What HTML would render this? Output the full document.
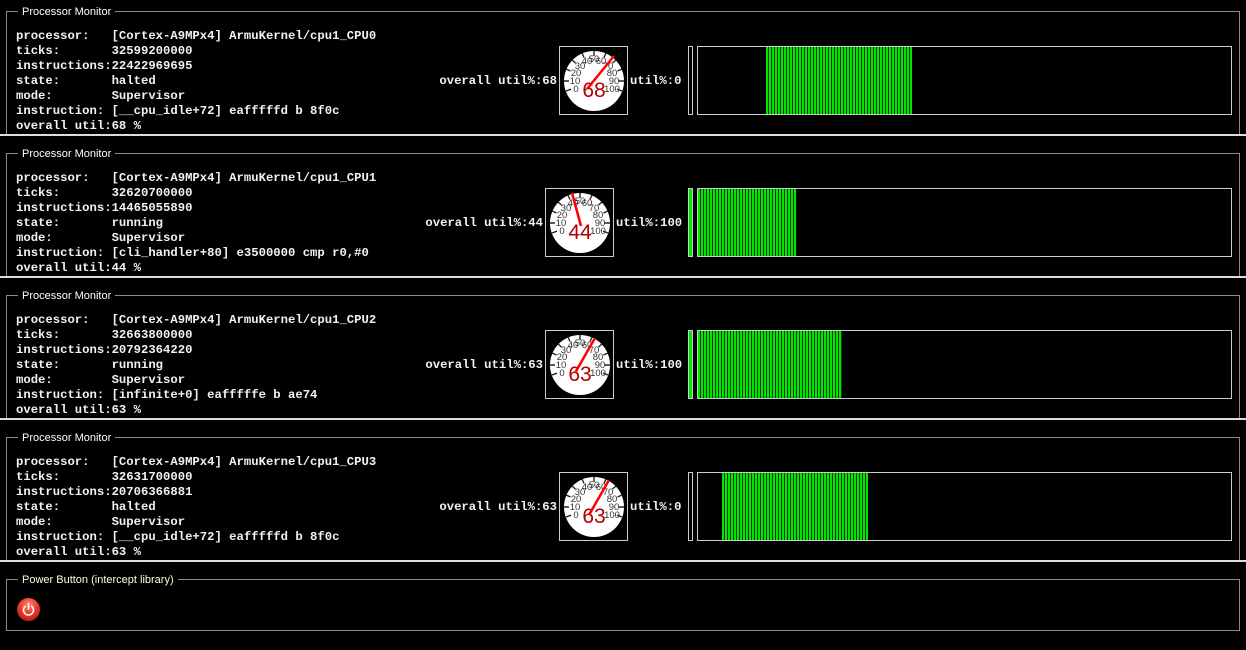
<!DOCTYPE html>
<html><head><meta charset="utf-8"><style>
*{margin:0;padding:0;box-sizing:border-box}
html,body{width:1246px;height:650px;background:#000;overflow:hidden;position:relative;color:#fff}
.fs{position:absolute;left:6px;width:1234px;border:1px solid #8a8a8a;border-bottom:none;height:123px}
.lg{position:absolute;left:11px;top:-6px;background:#000;padding:0 4px;font:11px "Liberation Sans",Arial,sans-serif;color:#fff;line-height:13px}
.sep{position:absolute;left:0;width:1246px;height:2px;background:#ddd}
.txt{position:absolute;left:16px;font:bold 12.25px/15px "Liberation Mono","DejaVu Sans Mono",monospace;white-space:pre;color:#f2f2f2}
.lab{position:absolute;font:bold 12.25px/15px "Liberation Mono","DejaVu Sans Mono",monospace;white-space:pre;color:#f2f2f2}
.gauge{position:absolute;width:69px;height:69px;border:1px solid #ccc}
.thin{position:absolute;left:688px;width:5px;height:69px;border:1px solid #ccc}
.graph{position:absolute;left:697px;width:535px;height:69px;border:1px solid #ccc}
.bars{position:absolute;top:0;bottom:0;background:repeating-linear-gradient(90deg,#00e600 0,#00e600 2px,#003800 2px,#003800 3px)}
svg text{font-family:"Liberation Sans",sans-serif}
</style></head><body>

<!-- Panel 1 -->
<div class="fs" style="top:11px"><div class="lg">Processor Monitor</div></div>
<div class="txt" style="top:29px">processor:   [Cortex-A9MPx4] ArmuKernel/cpu1_CPU0
ticks:       32599200000
instructions:22422969695
state:       halted
mode:        Supervisor
instruction: [__cpu_idle+72] eafffffd b 8f0c
overall util:68 %</div>
<div class="lab" style="top:74px;right:689px">overall util%:68</div>
<div class="gauge" style="left:559px;top:46px"><svg width="67" height="67" viewBox="0 0 67 67">
<circle cx="34" cy="34" r="30" fill="#fff"/>
<g stroke="#222" stroke-width="1.4"><path d="M6 44l5-1.8M4 34h5M6 22l4.5 2M12 13l3.5 3M22 6l2 4.5M34 4v5M46 6l-2 4.5M56 13l-3.5 3M62 22l-4.5 2M64 34h-5M62 44l-5-1.8"/></g>
<g font-size="9.5" fill="#333" text-anchor="middle"><text x="16" y="45">0</text><text x="15" y="37">10</text><text x="16" y="29">20</text><text x="20" y="22">30</text><text x="27" y="17">40</text><text x="34" y="15">50</text><text x="41" y="17">60</text><text x="48" y="22">70</text><text x="52" y="29">80</text><text x="54" y="37">90</text><text x="52" y="45">100</text></g>
<text x="34" y="50" font-size="21" fill="#b00000" text-anchor="middle">68</text>
<path d="M27 42L54 9" stroke="#f00" stroke-width="2.5"/></svg></div>
<div class="lab" style="top:74px;left:630px">util%:0</div>
<div class="thin" style="top:46px"></div>
<div class="graph" style="top:46px"><div class="bars" style="left:68px;width:146px;top:0"></div></div>

<div class="sep" style="top:134px"></div>

<!-- Panel 2 -->
<div class="fs" style="top:153px"><div class="lg">Processor Monitor</div></div>
<div class="txt" style="top:171px">processor:   [Cortex-A9MPx4] ArmuKernel/cpu1_CPU1
ticks:       32620700000
instructions:14465055890
state:       running
mode:        Supervisor
instruction: [cli_handler+80] e3500000 cmp r0,#0
overall util:44 %</div>
<div class="lab" style="top:216px;right:703px">overall util%:44</div>
<div class="gauge" style="left:545px;top:188px"><svg width="67" height="67" viewBox="0 0 67 67">
<circle cx="34" cy="34" r="30" fill="#fff"/>
<g stroke="#222" stroke-width="1.4"><path d="M6 44l5-1.8M4 34h5M6 22l4.5 2M12 13l3.5 3M22 6l2 4.5M34 4v5M46 6l-2 4.5M56 13l-3.5 3M62 22l-4.5 2M64 34h-5M62 44l-5-1.8"/></g>
<g font-size="9.5" fill="#333" text-anchor="middle"><text x="16" y="45">0</text><text x="15" y="37">10</text><text x="16" y="29">20</text><text x="20" y="22">30</text><text x="27" y="17">40</text><text x="34" y="15">50</text><text x="41" y="17">60</text><text x="48" y="22">70</text><text x="52" y="29">80</text><text x="54" y="37">90</text><text x="52" y="45">100</text></g>
<text x="34" y="50" font-size="21" fill="#b00000" text-anchor="middle">44</text>
<path d="M35 37L26 4" stroke="#f00" stroke-width="2.5"/></svg></div>
<div class="lab" style="top:216px;left:616px">util%:100</div>
<div class="thin" style="top:188px;background:#00e600"></div>
<div class="graph" style="top:188px"><div class="bars" style="left:0;width:98px"></div></div>

<div class="sep" style="top:276px"></div>

<!-- Panel 3 -->
<div class="fs" style="top:295px"><div class="lg">Processor Monitor</div></div>
<div class="txt" style="top:313px">processor:   [Cortex-A9MPx4] ArmuKernel/cpu1_CPU2
ticks:       32663800000
instructions:20792364220
state:       running
mode:        Supervisor
instruction: [infinite+0] eafffffe b ae74
overall util:63 %</div>
<div class="lab" style="top:358px;right:703px">overall util%:63</div>
<div class="gauge" style="left:545px;top:330px"><svg width="67" height="67" viewBox="0 0 67 67">
<circle cx="34" cy="34" r="30" fill="#fff"/>
<g stroke="#222" stroke-width="1.4"><path d="M6 44l5-1.8M4 34h5M6 22l4.5 2M12 13l3.5 3M22 6l2 4.5M34 4v5M46 6l-2 4.5M56 13l-3.5 3M62 22l-4.5 2M64 34h-5M62 44l-5-1.8"/></g>
<g font-size="9.5" fill="#333" text-anchor="middle"><text x="16" y="45">0</text><text x="15" y="37">10</text><text x="16" y="29">20</text><text x="20" y="22">30</text><text x="27" y="17">40</text><text x="34" y="15">50</text><text x="41" y="17">60</text><text x="48" y="22">70</text><text x="52" y="29">80</text><text x="54" y="37">90</text><text x="52" y="45">100</text></g>
<text x="34" y="50" font-size="21" fill="#b00000" text-anchor="middle">63</text>
<path d="M29 42L49 7" stroke="#f00" stroke-width="2.5"/></svg></div>
<div class="lab" style="top:358px;left:616px">util%:100</div>
<div class="thin" style="top:330px;background:#00e600"></div>
<div class="graph" style="top:330px"><div class="bars" style="left:0;width:144px"></div></div>

<div class="sep" style="top:418px"></div>

<!-- Panel 4 -->
<div class="fs" style="top:437px"><div class="lg">Processor Monitor</div></div>
<div class="txt" style="top:455px">processor:   [Cortex-A9MPx4] ArmuKernel/cpu1_CPU3
ticks:       32631700000
instructions:20706366881
state:       halted
mode:        Supervisor
instruction: [__cpu_idle+72] eafffffd b 8f0c
overall util:63 %</div>
<div class="lab" style="top:500px;right:689px">overall util%:63</div>
<div class="gauge" style="left:559px;top:472px"><svg width="67" height="67" viewBox="0 0 67 67">
<circle cx="34" cy="34" r="30" fill="#fff"/>
<g stroke="#222" stroke-width="1.4"><path d="M6 44l5-1.8M4 34h5M6 22l4.5 2M12 13l3.5 3M22 6l2 4.5M34 4v5M46 6l-2 4.5M56 13l-3.5 3M62 22l-4.5 2M64 34h-5M62 44l-5-1.8"/></g>
<g font-size="9.5" fill="#333" text-anchor="middle"><text x="16" y="45">0</text><text x="15" y="37">10</text><text x="16" y="29">20</text><text x="20" y="22">30</text><text x="27" y="17">40</text><text x="34" y="15">50</text><text x="41" y="17">60</text><text x="48" y="22">70</text><text x="52" y="29">80</text><text x="54" y="37">90</text><text x="52" y="45">100</text></g>
<text x="34" y="50" font-size="21" fill="#b00000" text-anchor="middle">63</text>
<path d="M29 42L49 7" stroke="#f00" stroke-width="2.5"/></svg></div>
<div class="lab" style="top:500px;left:630px">util%:0</div>
<div class="thin" style="top:472px"></div>
<div class="graph" style="top:472px"><div class="bars" style="left:24px;width:146px"></div></div>

<div class="sep" style="top:560px"></div>

<!-- Power -->
<div class="fs" style="top:579px;height:52px;border-bottom:1px solid #8a8a8a"><div class="lg" style="color:#fffbe0">Power Button (intercept library)</div></div>
<div style="position:absolute;left:17px;top:598px;width:23px;height:23px;border-radius:50%;background:radial-gradient(circle at 50% 30%,#ff8a7a 0,#e8392b 45%,#a8160e 100%)">
<svg width="23" height="23" viewBox="0 0 23 23"><path d="M8.2 8.3A5 5 0 1 0 14.8 8.3" fill="none" stroke="#fff" stroke-width="1.5" stroke-linecap="round"/><path d="M11.5 5.5v5.5" stroke="#fff" stroke-width="1.5" stroke-linecap="round"/></svg></div>

</body></html>
